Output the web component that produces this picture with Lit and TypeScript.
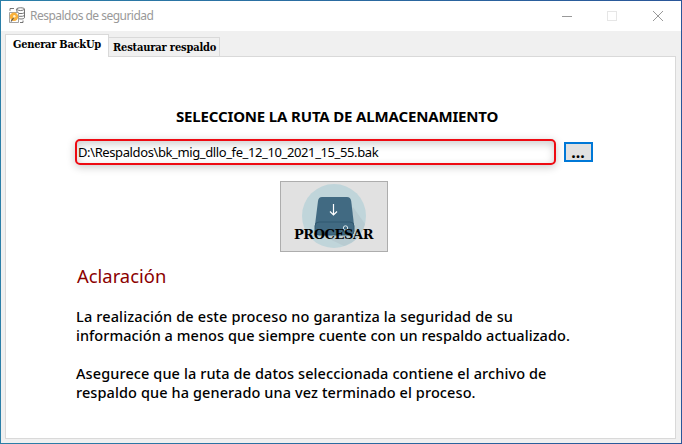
import { LitElement, html, css, svg } from "lit";
import { customElement } from "lit/decorators.js";

const appIcon = svg`
  <g fill="#fff" stroke="#666" stroke-width=".9">
    <path d="M7.500 2.200C8 .3 15.500 .3 15.500 2.200V10.500C15.500 12.200 11 12.300 9.500 11.500Z"/>
    <path d="M7.500 2.200C9 4 14 4 15.500 2.200M10 6.500q4 .4 5.500-.8M10 9.300q4 .4 5.500-.8" fill="none"/>
    <path d="M.5 5.500H9.500V15.500H.5Z" stroke="#999"/>
    <path d="M1 3.800V1.500H5M11 15.500H14V13.500" fill="none"/>
  </g>
  <circle cx="5" cy="9.800" r="4.200" fill="#f9b13c"/>
  <path d="M4.500 11L2 14.500" stroke="#555" stroke-width="1.200"/>
  <circle cx="5.300" cy="9.300" r="1.200" fill="#fff3d0"/>`;

@customElement("app-root")
export class AppRoot extends LitElement {
  static styles = css`
    :host { display: block; width: 682px; height: 444px; }
    * { box-sizing: border-box; }
    .window {
      width: 682px; height: 444px; padding: 1px;
      background: linear-gradient(90deg, #2b7fa8, #2a5699);
      font-family: "Noto Sans", "Open Sans", sans-serif; color: #000;
      overflow: hidden;
    }
    .frame { height: 442px; background: #f0f0f0; display: flex; flex-direction: column; }
    .title { height: 30px; flex: none; background: #fff; display: flex; align-items: center; }
    .title .logo { margin: 0 5px 2px 8px; display: block; }
    .caption { color: #999; font-size: 12px; letter-spacing: -.52px; line-height: 16px; flex: 1; white-space: nowrap; }
    .controls { display: flex; width: 138px; flex: none; }
    .controls svg { display: block; width: 46px; height: 28px; }
    .tabs { display: flex; align-items: flex-end; height: 25px; padding-left: 4px; flex: none; }
    .tab {
      border: 1px solid #d9d9d9; border-left: 0; border-bottom: 0; height: 19px; width: 111px;
      font: bold 11px/18px "DejaVu Serif", serif; font-stretch: condensed; letter-spacing: -.17px;
      white-space: nowrap; padding: 1px 0 0 4px; background: #f0f0f0;
    }
    .tab.on {
      height: 23px; width: 104px; background: #fff; border-left: 1px solid #d9d9d9;
      padding: 1px 0 0 7px; margin-bottom: -1px; z-index: 1; letter-spacing: -.27px;
    }
    .panel {
      flex: none; width: 671px; height: 383px; margin-left: 4px;
      border: 1px solid #d9d9d9; background: #fff; padding: 49px 0 0 70px;
    }
    h1 { margin: 0 0 0 100px; font-size: 15px; letter-spacing: -.16px; line-height: 20px; font-weight: 700; white-space: nowrap; }
    .row { display: flex; align-items: center; margin: 13px 0 0 -1px; }
    .path {
      width: 481px; height: 26px; border: 2px solid #ee0a12; border-radius: 5px;
      padding: 0 1px; font-size: 13px; letter-spacing: -.39px; line-height: 22px; white-space: nowrap; background: #fff;
      box-shadow: 0 2px 8px rgba(0,0,0,.22), inset 0 3px 8px rgba(0,0,0,.2);
    }
    .browse {
      width: 29px; height: 20px; margin: 0 0 0 8px; border: 2px solid #0078d7;
      background: #e1e1e1; padding: 0 1px 0 0; font: bold 16px/15px "Noto Sans", sans-serif; color: #000;
    }
    .process {
      display: grid; width: 108px; height: 71px; margin: 16px 0 0 204px;
      border: 1px solid #adadad; background: #e1e1e1; padding: 0; color: #000;
    }
    .process > * { grid-area: 1 / 1; }
    .process .disk { display: block; width: 106px; height: 69px; }
    .process .label {
      align-self: start; justify-self: center; margin: 44px 1px 0 0;
      font: bold 13px/18px "DejaVu Serif", serif; letter-spacing: -.4px;
    }
    h2 { margin: 11px 0 0 1px; font-size: 18.400px; line-height: 26px; font-weight: 400; color: #8b0000; }
    p { margin: 0; font-size: 14.500px; line-height: 19px; font-weight: 500; white-space: nowrap; letter-spacing: .1px; }
    .first { margin-top: 18px; }
    .second { margin-top: 19px; }
    .line { display: block; width: max-content; }
    .loose { letter-spacing: .14px; }
    .tight { letter-spacing: .055px; }
  `;

  render() {
    return html`<div class="window"><div class="frame">
      <header class="title">
        <svg class="logo" width="16" height="17" viewBox="0 0 16 17" fill="none">${appIcon}</svg>
        <span class="caption">Respaldos de seguridad</span>
        <div class="controls">
          <svg viewBox="0 0 46 28"><path d="M19 14.500h10" stroke="#999"/></svg>
          <svg viewBox="0 0 46 28"><rect x="18.500" y="9.500" width="9" height="9" fill="none" stroke="#e6e6e6"/></svg>
          <svg viewBox="0 0 46 28"><path d="M18 9l10 10M28 9l-10 10" stroke="#999"/></svg>
        </div>
      </header>
      <nav class="tabs">
        <div class="tab on">Generar BackUp</div>
        <div class="tab">Restaurar respaldo</div>
      </nav>
      <main class="panel">
        <h1>SELECCIONE LA RUTA DE ALMACENAMIENTO</h1>
        <div class="row">
          <div class="path">D:\\Respaldos\\bk_mig_dllo_fe_12_10_2021_15_55.bak</div>
          <button class="browse">...</button>
        </div>
        <button class="process">
          <svg class="disk" viewBox="0 0 106 69">
            <circle cx="53" cy="34" r="32" fill="#c0d5da"/>
            <path d="M72 25L84 42Q80 58 63 64L40 53Z" fill="#b8cbd1"/>
            <path d="M41 15H66Q69.500 15 70.200 19L73 43H34L37 19Q37.500 15 41 15Z" fill="#416a82"/>
            <path d="M38 40H69Q73 40 73 44V49Q73 53 69 53H38Q34 53 34 49V44Q34 40 38 40Z" fill="#416a82" stroke="#315970"/>
            <path d="M52.500 22V32.500M49 29.500l3.500 3.500 3.500-3.500" fill="none" stroke="#fff" stroke-width="1.200"/>
            <circle cx="64.500" cy="46" r="2.200" fill="none" stroke="#dbe8ec"/>
          </svg>
          <span class="label">PROCESAR</span>
        </button>
        <h2>Aclaración</h2>
        <p class="first"><span class="line loose">La realización de este proceso no garantiza la seguridad de su</span><span class="line tight">información a menos que siempre cuente con un respaldo actualizado.</span></p>
        <p class="second"><span class="line">Asegurece que la ruta de datos seleccionada contiene el archivo de</span><span class="line">respaldo que ha generado una vez terminado el proceso.</span></p>
      </main>
    </div></div>`;
  }
}
